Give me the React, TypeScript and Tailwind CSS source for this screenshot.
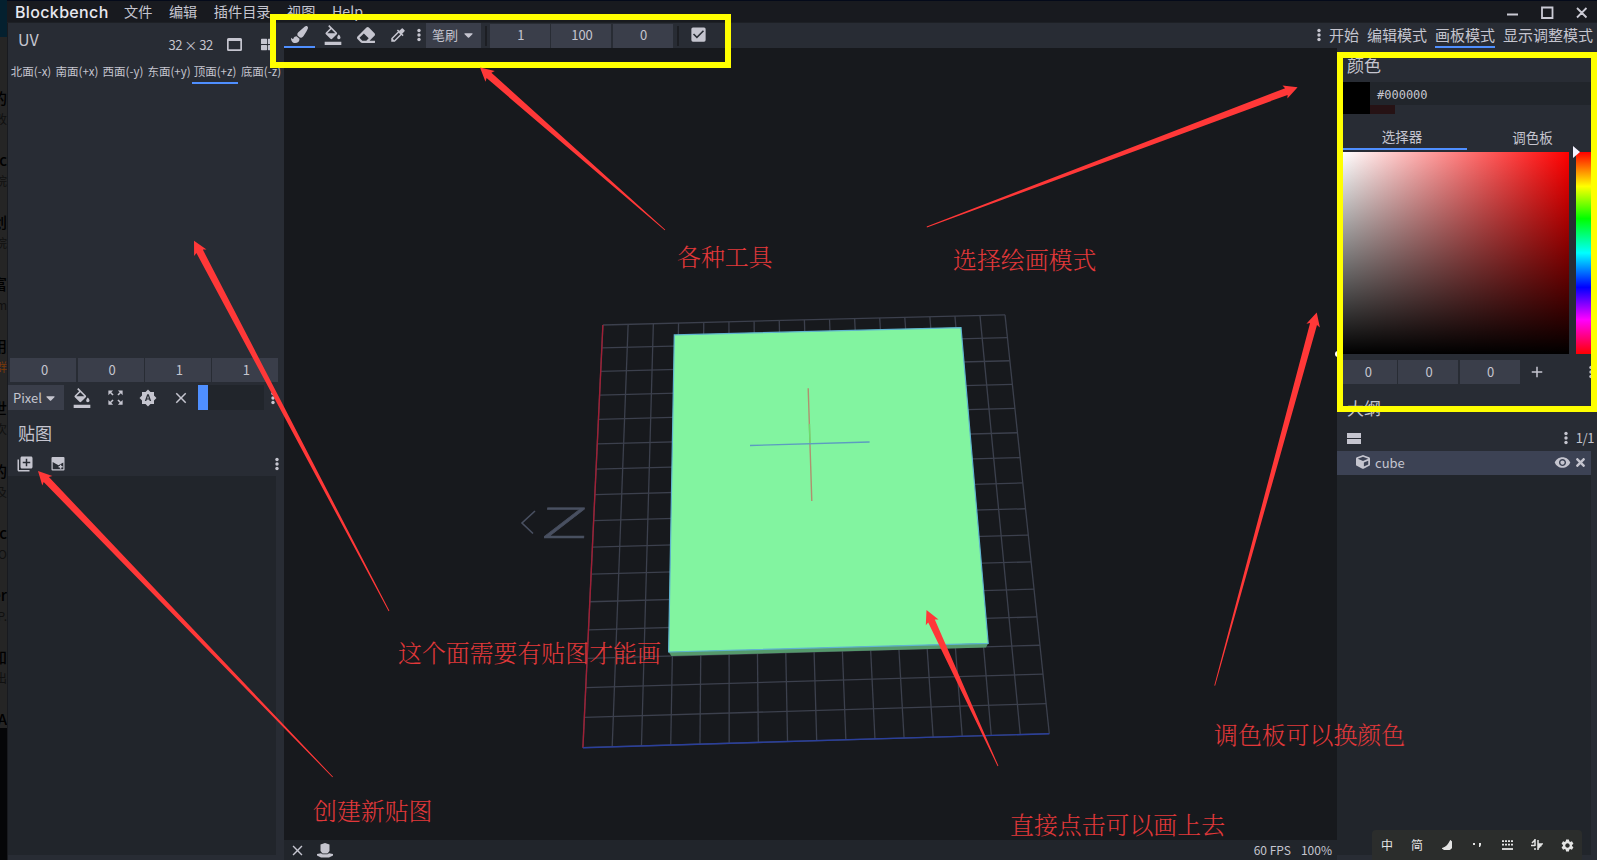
import React from "react";
import { FaPaintBrush, FaEraser, FaCaretDown, FaCube, FaTimes, FaThLarge } from "react-icons/fa";
import {
  MdFormatColorFill,
  MdZoomOutMap,
  MdBrightnessAuto,
  MdClear,
  MdLibraryAdd,
  MdVisibility,
  MdCheckBox,
  MdColorize,
  MdAdd,
  MdSettings,
} from "react-icons/md";

type Pt = [number, number];

/* ---------- perspective grid ---------- */
const TL: Pt = [602.9, 325];
const TR: Pt = [1005, 314.8];
const BR: Pt = [1049.3, 733.7];
const BL: Pt = [582.9, 747.7];

function project(u: number, v: number): Pt {
  const dx1 = TR[0] - BR[0];
  const dx2 = BL[0] - BR[0];
  const dx3 = TL[0] - TR[0] + BR[0] - BL[0];
  const dy1 = TR[1] - BR[1];
  const dy2 = BL[1] - BR[1];
  const dy3 = TL[1] - TR[1] + BR[1] - BL[1];
  const den = dx1 * dy2 - dx2 * dy1;
  const g = (dx3 * dy2 - dx2 * dy3) / den;
  const h = (dx1 * dy3 - dx3 * dy1) / den;
  const a = TR[0] - TL[0] + g * TR[0];
  const b = BL[0] - TL[0] + h * BL[0];
  const d = TR[1] - TL[1] + g * TR[1];
  const e = BL[1] - TL[1] + h * BL[1];
  const w = g * u + h * v + 1;
  return [(a * u + b * v + TL[0]) / w, (d * u + e * v + TL[1]) / w];
}

function GridLine({ from, to, color, width = 1.3 }: { from: Pt; to: Pt; color: string; width?: number }) {
  return <line x1={from[0]} y1={from[1]} x2={to[0]} y2={to[1]} stroke={color} strokeWidth={width} />;
}

const STEPS = Array.from({ length: 17 }, (_, i) => i / 16);

function Scene() {
  return (
    <svg className="block h-full w-full" viewBox="284 48 1053 792">
      {STEPS.map((t) => (
        <g key={t}>
          <GridLine from={project(t, 0)} to={project(t, 1)} color="#3c404d" />
          <GridLine from={project(0, t)} to={project(1, t)} color="#3c404d" />
        </g>
      ))}
      <GridLine from={TL} to={BL} color="#a01f35" width={1.4} />
      <GridLine from={BL} to={BR} color="#2a3f9c" width={1.4} />
      <polyline points="535,511 522,523 533,533.5" fill="none" stroke="#495061" strokeWidth="1.6" />
      <text
        transform="translate(541.5 537.5) skewX(-3) scale(1.85 1)"
        fontFamily="Open Sans, sans-serif"
        fontWeight="300"
        fontSize="42.5"
        fill="#495061"
        stroke="#495061"
        strokeWidth="0.5"
      >
        Z
      </text>
      <polygon points="668.6,652 988.2,643.3 986,647.5 671.4,656" fill="#559a6c" />
      <polygon
        points="674.3,334.9 961,327.6 988.2,643.3 668.6,652"
        fill="#82f4a0"
        stroke="#5fb4cf"
        strokeWidth="1.2"
      />
      <line x1="808.2" y1="388.3" x2="811.8" y2="501" stroke="#b0906e" strokeWidth="1.4" />
      <line x1="809.4" y1="424" x2="810" y2="443" stroke="#6ade6c" strokeWidth="1.4" />
      <line x1="750" y1="445.5" x2="869.6" y2="442" stroke="#5c9cc0" strokeWidth="1.4" />
    </svg>
  );
}

/* ---------- annotations ---------- */
const ARROWS: { tip: Pt; tail: Pt }[] = [
  { tip: [480, 67.5], tail: [665, 230] },
  { tip: [1297.6, 87.3], tail: [926.8, 227] },
  { tip: [194, 240.7], tail: [389, 611] },
  { tip: [38, 471], tail: [332.7, 777] },
  { tip: [926.5, 610], tail: [998, 766] },
  { tip: [1316.7, 312.5], tail: [1214.7, 685.7] },
];

function arrowPoints(tip: Pt, tail: Pt): string {
  const len = Math.hypot(tail[0] - tip[0], tail[1] - tip[1]);
  const ux = (tail[0] - tip[0]) / len;
  const uy = (tail[1] - tip[1]) / len;
  const at = (back: number, side: number) =>
    `${(tip[0] + ux * back - uy * side).toFixed(1)},${(tip[1] + uy * back + ux * side).toFixed(1)}`;
  return [
    at(0, 0),
    at(13.5, 7),
    at(12, 3.6),
    at(len, 0.4),
    at(len, -0.4),
    at(12, -3.6),
    at(13.5, -7),
  ].join(" ");
}

function Note({ className, children }: { className: string; children: React.ReactNode }) {
  return (
    <div
      className={`absolute whitespace-nowrap font-['Noto_Serif_CJK_SC','Noto_Sans_CJK_SC',sans-serif] text-[23.9px] font-light leading-[24px] text-[#e2383a] ${className}`}
    >
      {children}
    </div>
  );
}

function Annotations() {
  return (
    <div className="pointer-events-none absolute inset-0">
      <div className="absolute left-[270px] top-[14px] h-[54px] w-[461px] border-[6px] border-[#ffff00]" />
      <div className="absolute left-[1337px] top-[52px] h-[360px] w-[260px] border-[6px] border-[#ffff00]" />
      <svg className="absolute inset-0 h-full w-full" viewBox="0 0 1597 860">
        {ARROWS.map((a) => (
          <polygon key={a.tip.join()} points={arrowPoints(a.tip, a.tail)} fill="#ff3838" />
        ))}
      </svg>
      <Note className="left-[677px] top-[244px]">各种工具</Note>
      <Note className="left-[953px] top-[247px]">选择绘画模式</Note>
      <Note className="left-[398px] top-[640px]">这个面需要有贴图才能画</Note>
      <Note className="left-[313px] top-[798px]">创建新贴图</Note>
      <Note className="left-[1010px] top-[812px]">直接点击可以画上去</Note>
      <Note className="left-[1214px] top-[722px]">调色板可以换颜色</Note>
    </div>
  );
}

/* ---------- background window sliver ---------- */
const SLIVER: [string, string][] = [
  ["的", "改"],
  ["ec", "院"],
  ["创", "院"],
  ["富", "m"],
  ["用", "群"],
  ["世", "次"],
  ["的", "及"],
  ["ec", "O"],
  ["er", "P."],
  ["知", "出"],
  ["A", ""],
];

function Sliver() {
  return (
    <div className="flex w-[7px] shrink-0 flex-col overflow-hidden bg-[#050608]">
      <div className="h-[37px] shrink-0 bg-[#04202f]" />
      <div className="flex h-[691px] shrink-0 flex-col overflow-hidden bg-[#252525] pt-[50px]">
        {SLIVER.map(([a, b], i) => (
          <div key={i} className="flex h-[62.1px] shrink-0 flex-col items-end leading-[21px]">
            <span className="text-[15px] font-medium text-black">{a}</span>
            <span className={b === "群" ? "text-[12px] text-[#7a3908]" : "text-[12px] text-[#101010]"}>{b}</span>
          </div>
        ))}
      </div>
    </div>
  );
}

/* ---------- controls ---------- */
function NumberField({ value, className }: { value: string; className: string }) {
  return (
    <div className={`flex h-6 shrink-0 items-center justify-center bg-[#3a3e4a] pb-[2px] text-[13px] ${className}`}>
      {value}
    </div>
  );
}

function Slot({ className = "", children }: { className?: string; children: React.ReactNode }) {
  return <div className={`flex shrink-0 items-center justify-center ${className}`}>{children}</div>;
}

function Dots({ className = "" }: { className?: string }) {
  return (
    <svg className={`shrink-0 ${className}`} width="4" height="14" viewBox="0 0 4 14" fill="currentColor">
      <circle cx="2" cy="2.500" r="1.700" />
      <circle cx="2" cy="7" r="1.700" />
      <circle cx="2" cy="11.500" r="1.700" />
    </svg>
  );
}

function TitleBar() {
  return (
    <div className="flex h-[22px] shrink-0 items-center border-t border-[#040a1a] bg-[#181a1f]">
      <div className="w-[117px] shrink-0 whitespace-nowrap pl-2 font-[Inter,sans-serif] text-[16px] font-medium tracking-[0.35px] text-[#e8e8f0]">
        Blockbench
      </div>
      <div className="flex gap-[16.5px] whitespace-nowrap text-[14.2px]">
        <span>文件</span>
        <span>编辑</span>
        <span>插件目录</span>
        <span>视图</span>
        <span>Help</span>
      </div>
      <svg
        className="ml-auto mr-[7px] shrink-0"
        width="84"
        height="20"
        viewBox="0 0 84 20"
        fill="none"
        stroke="#cacad4"
        strokeWidth="1.8"
      >
        <path d="M1 12.500h11M36 5.500h10.500v10.500h-10.500zM71 6l9.500 9.500M80.500 6l-9.500 9.500" />
      </svg>
    </div>
  );
}

const FACES = ["北面(-x)", "南面(+x)", "西面(-y)", "东面(+y)", "顶面(+z)", "底面(-z)"];

function LeftPanel() {
  return (
    <div className="flex w-[276px] shrink-0 flex-col bg-[#282c34]">
      <div className="flex h-[37px] shrink-0 items-start">
        <span className="w-[160.500px] pl-[10px] pt-[8px] text-[16px]">UV</span>
        <span className="w-[43px] whitespace-nowrap pt-[15px] text-[13px] tracking-[-0.5px]">32 × 32</span>
        <svg className="ml-[15px] mt-[15px]" width="15" height="13" viewBox="0 0 15 13">
          <path
            fill="currentColor"
            fillRule="evenodd"
            d="M1.500 0h12a1.500 1.500 0 0 1 1.500 1.500v10a1.500 1.500 0 0 1-1.500 1.500h-12a1.500 1.500 0 0 1-1.500-1.500v-10a1.500 1.500 0 0 1 1.500-1.500zM1.700 3v8.300h11.600v-8.300z"
          />
        </svg>
        <FaThLarge className="ml-[19px] mt-[15px] h-[13px] w-[13px]" />
      </div>
      <div className="flex h-[24px] shrink-0 whitespace-nowrap text-[11.5px]">
        {FACES.map((f) => (
          <div
            key={f}
            className={`flex w-[46px] shrink-0 items-center justify-center border-b-2 pt-[1px] ${
              f === "顶面(+z)" ? "border-[#4f8fff]" : "border-transparent"
            }`}
          >
            {f}
          </div>
        ))}
      </div>
      <div className="h-[274px] shrink-0" />
      <div className="flex shrink-0 gap-[1.5px] pl-[2px]">
        <NumberField value="0" className="w-[66px] pl-[3px]" />
        <NumberField value="0" className="w-[66px] pl-[3px]" />
        <NumberField value="1" className="w-[65.500px] pl-[3px]" />
        <NumberField value="1" className="w-[65.500px] pl-[3px]" />
      </div>
      <div className="mt-[3px] flex h-[25px] shrink-0 items-center">
        <div className="flex h-full w-[56px] items-center justify-end gap-[2px] bg-[#3a3e4a] pr-[7px] text-[13px]">
          Pixel <FaCaretDown className="h-[14px]" />
        </div>
        <Slot className="w-[35px]">
          <MdFormatColorFill size={20} />
        </Slot>
        <Slot className="w-[32px]">
          <MdZoomOutMap size={19} />
        </Slot>
        <Slot className="w-[34px]">
          <MdBrightnessAuto size={18} />
        </Slot>
        <Slot className="w-[32px]">
          <MdClear size={18} />
        </Slot>
        <div className="ml-[1px] h-full w-[66px] bg-[#21252b]">
          <div className="h-full w-[10px] bg-[#4f8fff]" />
        </div>
        <Dots className="ml-[7px]" />
      </div>
      <div className="flex h-[42px] shrink-0 items-center pl-[10px] pt-[3px] text-[17px]">贴图</div>
      <div className="flex h-[24px] shrink-0 items-center">
        <Slot className="w-[33px]">
          <MdLibraryAdd size={18} />
        </Slot>
        <Slot className="w-[33px]">
          <svg width="14" height="14" viewBox="0 0 14 14">
            <path
              fill="currentColor"
              fillRule="evenodd"
              d="M1.500 0h11a1 1 0 0 1 1 1v11.500a1 1 0 0 1-1 1h-11a1 1 0 0 1-1-1v-11.500a1 1 0 0 1 1-1zM1.700 5l3 1.800 2.800 1.500 4.800-2.800v6.800h-10.600z"
            />
            <path d="M9.600 7.800v4M7.600 9.800h4" stroke="currentColor" strokeWidth="1.400" />
          </svg>
        </Slot>
        <Dots className="ml-auto mr-[5px]" />
      </div>
      <div className="mb-[5px] mr-[8px] grow bg-[#21252b]" />
    </div>
  );
}

function ToolBar() {
  return (
    <div className="flex h-[25px] shrink-0 items-center bg-[#282c34] text-[13px]">
      <Slot className="h-full w-[31px] border-b-2 border-[#4f8fff]">
        <FaPaintBrush size={17} />
      </Slot>
      <Slot className="w-[35px] pb-[1px]">
        <MdFormatColorFill size={20} />
      </Slot>
      <Slot className="w-[32px] pb-[2px]">
        <FaEraser size={18} />
      </Slot>
      <Slot className="w-[32px] pb-[2px]">
        <MdColorize size={18} />
      </Slot>
      <Slot className="w-[10px] pb-[1px]">
        <Dots />
      </Slot>
      <div className="ml-[2px] flex h-full w-[55px] items-center justify-center gap-1 bg-[#3a3e4a] pb-[2px]">
        笔刷 <FaCaretDown className="h-[14px]" />
      </div>
      <div className="ml-[4px] mr-[3px] h-5 w-[2px] bg-[#1c1e23]" />
      <div className="flex gap-[1.5px]">
        <NumberField value="1" className="w-[59.500px] pl-[2px]" />
        <NumberField value="100" className="w-[60px] pl-[2px]" />
        <NumberField value="0" className="w-[60px] pl-[2px]" />
      </div>
      <div className="ml-[4px] mr-[10px] h-5 w-[2px] bg-[#1c1e23]" />
      <MdCheckBox size={19} className="mb-[2px]" />
      <div className="ml-auto flex h-full gap-[8px] whitespace-nowrap pr-[4px] text-[15px]">
        <div className="flex items-center pb-[2px]">
          <Dots />
          <span className="ml-[8px]">开始</span>
        </div>
        <span className="flex items-center pb-[2px]">编辑模式</span>
        <span className="flex items-center border-b-2 border-[#4f8fff]">画板模式</span>
        <span className="flex items-center pb-[2px]">显示调整模式</span>
      </div>
    </div>
  );
}

function StatusBar() {
  return (
    <div className="flex h-5 shrink-0 items-center bg-[#21252b] text-[12px]">
      <Slot className="w-[26px]">
        <MdClear size={17} />
      </Slot>
      <Slot className="w-[29px]">
        <svg width="16" height="15" viewBox="0 0 16 15" fill="currentColor">
          <path d="M3.500 1.500 8 0l4.500 1.500v6.500l-2 2.500h-5l-2-2.500zM0 11l4-.8 1.500 1h5l1.500-1 4 .8v1.500l-4 2h-8l-4-2z" />
        </svg>
      </Slot>
      <span className="ml-auto">60 FPS</span>
      <span className="ml-[10px] mr-[5px]">100%</span>
    </div>
  );
}

function ColorPanel() {
  return (
    <div className="flex shrink-0 flex-col">
      <div className="h-[34px] shrink-0 pl-[10px] pt-[8px] text-[17px]">颜色</div>
      <div className="flex h-[32px] shrink-0 pl-[6px]">
        <div className="w-[27px] shrink-0 bg-black" />
        <div className="grow">
          <div className="flex h-[23px] items-center bg-[#21252b] pl-[7px] pt-[2px] font-['DejaVu_Sans_Mono',monospace] text-[12px]">
            #000000
          </div>
          <div className="h-[9px] w-[25px] bg-[#261214]" />
        </div>
      </div>
      <div className="mt-[12px] flex h-[24px] shrink-0 pl-[6px] text-[13.500px]">
        <div className="flex w-[124px] items-center justify-center border-b-2 border-[#4f8fff] pr-[6px]">选择器</div>
        <div className="flex w-[124px] items-center justify-center pl-[7px]">调色板</div>
      </div>
      <div className="mt-[2px] flex h-[202px] shrink-0 pl-[6px]">
        <div className="w-[226px] bg-[linear-gradient(to_bottom,transparent,#000),linear-gradient(to_right,#fff,#f00)]" />
        <div className="relative ml-[7px] w-[15px] bg-[linear-gradient(to_bottom,#f00,#ff0_17%,#0f0_33%,#0ff_50%,#00f_67%,#f0f_83%,#f00)]">
          <svg className="absolute -left-[3px] -top-[6px]" width="8" height="12" viewBox="0 0 8 12">
            <path d="M0 0 7 6 0 12z" fill="#f4f3ff" />
          </svg>
        </div>
      </div>
      <div className="mt-[6px] flex h-6 shrink-0 items-center gap-[1.500px] pl-[1px]">
        <NumberField value="0" className="w-[58.500px] pl-[2px]" />
        <NumberField value="0" className="w-[60px] pl-[2px]" />
        <NumberField value="0" className="w-[60px] pl-[2px]" />
        <Slot className="w-[32px] pb-[1px]">
          <MdAdd size={18} />
        </Slot>
        <Dots className="ml-auto mr-[4px]" />
      </div>
    </div>
  );
}

function RightPanel() {
  return (
    <div className="relative flex w-[260px] shrink-0 flex-col bg-[#282c34]">
      <div className="absolute -left-[2px] top-[303px] h-[6px] w-[6px] rounded-full bg-white" />
      <ColorPanel />
      <div className="h-[41px] shrink-0 pl-[10px] pt-[15px] text-[17px]">大纲</div>
      <div className="flex h-[26px] shrink-0 items-center pl-[10px] text-[13px]">
        <svg width="14" height="11" viewBox="0 0 14 11" fill="currentColor">
          <path d="M0 0h14v5h-14zM0 6h14v5h-14z" />
        </svg>
        <Dots className="ml-auto" />
        <span className="ml-[8px] pb-[2px] pr-[3px] tracking-[-0.4px]">1/1</span>
      </div>
      <div className="mr-[6px] flex h-6 shrink-0 items-center bg-[#3c4254] pb-[2px] text-[13px]">
        <FaCube className="ml-[19px]" size={14} />
        <span className="ml-[5px]">cube</span>
        <MdVisibility className="ml-auto" size={17} />
        <FaTimes className="ml-[3px] mr-[4px]" size={13} />
      </div>
      <div className="mb-[5px] mr-[6px] grow bg-[#21252b]" />
    </div>
  );
}

function InputMethodBar() {
  return (
    <div className="absolute bottom-0 left-[1372px] flex h-[30px] w-[210px] items-center rounded-t bg-[#2b2d2c] text-[12px] text-[#e4e4e4]">
      <Slot className="w-[30px]">中</Slot>
      <Slot className="w-[30px]">简</Slot>
      <Slot className="w-[30px]">
        <svg width="10" height="10" viewBox="0 0 10 10">
          <path d="M8.500 1a5 4.500 0 0 1-7.500 7.500Q6 6.500 8.500 1z" fill="currentColor" stroke="currentColor" strokeWidth="1.500" />
        </svg>
      </Slot>
      <Slot className="w-[30px]">
        <svg width="10" height="6" viewBox="0 0 10 6" fill="currentColor">
          <path d="M1 1h2v2h-2zM7 1h2v2l-1 2h-1z" />
        </svg>
      </Slot>
      <Slot className="w-[30px]">
        <svg width="11" height="10" viewBox="0 0 11 10" stroke="currentColor" strokeWidth="1.800">
          <path d="M0 1.200h11M0 4.700h11" strokeDasharray="2 1" />
          <path d="M0 9h11" />
        </svg>
      </Slot>
      <Slot className="w-[30px]">
        <svg width="12" height="12" viewBox="0 0 12 12" fill="none" stroke="currentColor" strokeWidth="1.500">
          <path d="M4 0v7M1 4l3-3M0 6.500h4M4 9v2M7 1v10M7 5h4L7 9.500M7 6.500h4" />
        </svg>
      </Slot>
      <Slot className="w-[30px]">
        <MdSettings size={15} />
      </Slot>
    </div>
  );
}

export default function App() {
  return (
    <div className="relative flex h-[860px] w-[1597px] overflow-hidden bg-[#181a1f] font-['Noto_Sans_CJK_SC',sans-serif] leading-none text-[#c5c5cf]">
      <Sliver />
      <div className="flex min-w-0 grow flex-col">
        <TitleBar />
        <div className="flex min-h-0 grow border-t border-[#1d2025] pl-px">
          <LeftPanel />
          <div className="flex min-w-0 grow flex-col">
            <ToolBar />
            <div className="flex min-h-0 grow">
              <div className="flex w-[1053px] shrink-0 flex-col">
                <div className="min-h-0 grow bg-[#17191d]">
                  <Scene />
                </div>
                <StatusBar />
              </div>
              <RightPanel />
            </div>
          </div>
        </div>
      </div>
      <InputMethodBar />
      <Annotations />
    </div>
  );
}
